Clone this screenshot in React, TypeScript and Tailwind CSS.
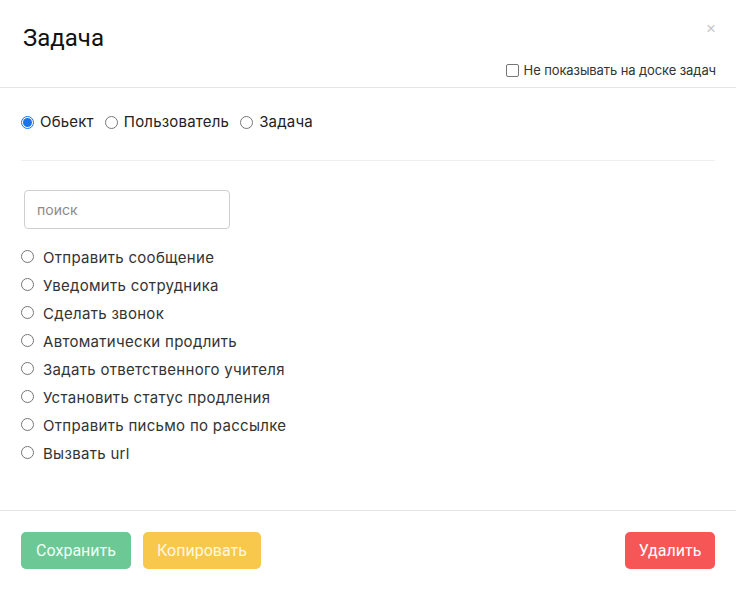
const actions = [
  "Отправить сообщение",
  "Уведомить сотрудника",
  "Сделать звонок",
  "Автоматически продлить",
  "Задать ответственного учителя",
  "Установить статус продления",
  "Отправить письмо по рассылке",
  "Вызвать url",
];

function Radio({ checked = false }: { checked?: boolean }) {
  return (
    <span
      className={
        "inline-flex h-[13px] w-[13px] shrink-0 items-center justify-center rounded-full border " +
        (checked ? "border-[#1a73e8]" : "border-[#767676]")
      }
    >
      {checked && <span className="h-[9px] w-[9px] rounded-full bg-[#1a73e8]" />}
    </span>
  );
}

export default function App() {
  return (
    <div className="h-[590px] w-[736px] bg-white font-['Inter',sans-serif] text-[#222]">
      <div className="relative h-[88px] border-b border-[#e5e5e5]">
        <h1 className="absolute left-[23px] top-[24px] font-['Roboto',sans-serif] text-[24px] font-normal leading-7 text-[#111]">
          Задача
        </h1>
        <span className="absolute right-[20px] top-[19px] font-['Liberation_Sans',sans-serif] text-[17px] leading-5 text-[#c8c8c8]">
          ×
        </span>
        <label className="absolute right-[20px] top-[62px] flex items-center gap-[5px] text-[13px] leading-4 tracking-[-0.1px] text-[#333]">
          <span className="h-[13px] w-[13px] rounded-[2px] border border-[#767676]" />
          Не показывать на доске задач
        </label>
      </div>

      <div className="px-[21px]">
        <div className="flex h-[72px] items-center gap-[11px] pb-[4px] text-[15px] tracking-[0.2px] text-[#222]">
          <span className="flex items-center gap-[6px]">
            <Radio checked />
            Обьект
          </span>
          <span className="flex items-center gap-[6px]">
            <Radio />
            Пользователь
          </span>
          <span className="flex items-center gap-[6px]">
            <Radio />
            Задача
          </span>
        </div>
        <div className="border-t border-[#efefef]" />

        <div className="pt-[29px]">
          <div className="ml-[3px] flex h-[39px] w-[206px] items-center rounded-[4px] border border-[#cfcfcf] px-[12px] text-[14px] text-[#8a8a8a]">
            поиск
          </div>
          <div className="mt-[15px] flex flex-col">
            {actions.map((a) => (
              <div key={a} className="flex h-[28px] items-center gap-[9px] text-[15px] tracking-[0.3px] text-[#333]">
                <span className="-mt-[4px] flex">
                  <Radio />
                </span>
                <span>{a}</span>
              </div>
            ))}
          </div>
        </div>
      </div>

      <div className="mt-[42px] flex items-center justify-between border-t border-[#e5e5e5] px-[21px] pt-[21px]">
        <div className="flex gap-[12px]">
          <button className="h-[37px] w-[110px] rounded-[5px] bg-[#6cc895] font-['Roboto',sans-serif] text-[16px] text-[#f0fff5]">
            Сохранить
          </button>
          <button className="h-[37px] w-[118px] rounded-[5px] bg-[#f7c84c] font-['Roboto',sans-serif] text-[16px] text-[#fff8e0]">
            Копировать
          </button>
        </div>
        <button className="h-[37px] w-[90px] rounded-[5px] bg-[#f75656] font-['Roboto',sans-serif] text-[16px] text-white">
          Удалить
        </button>
      </div>
    </div>
  );
}
